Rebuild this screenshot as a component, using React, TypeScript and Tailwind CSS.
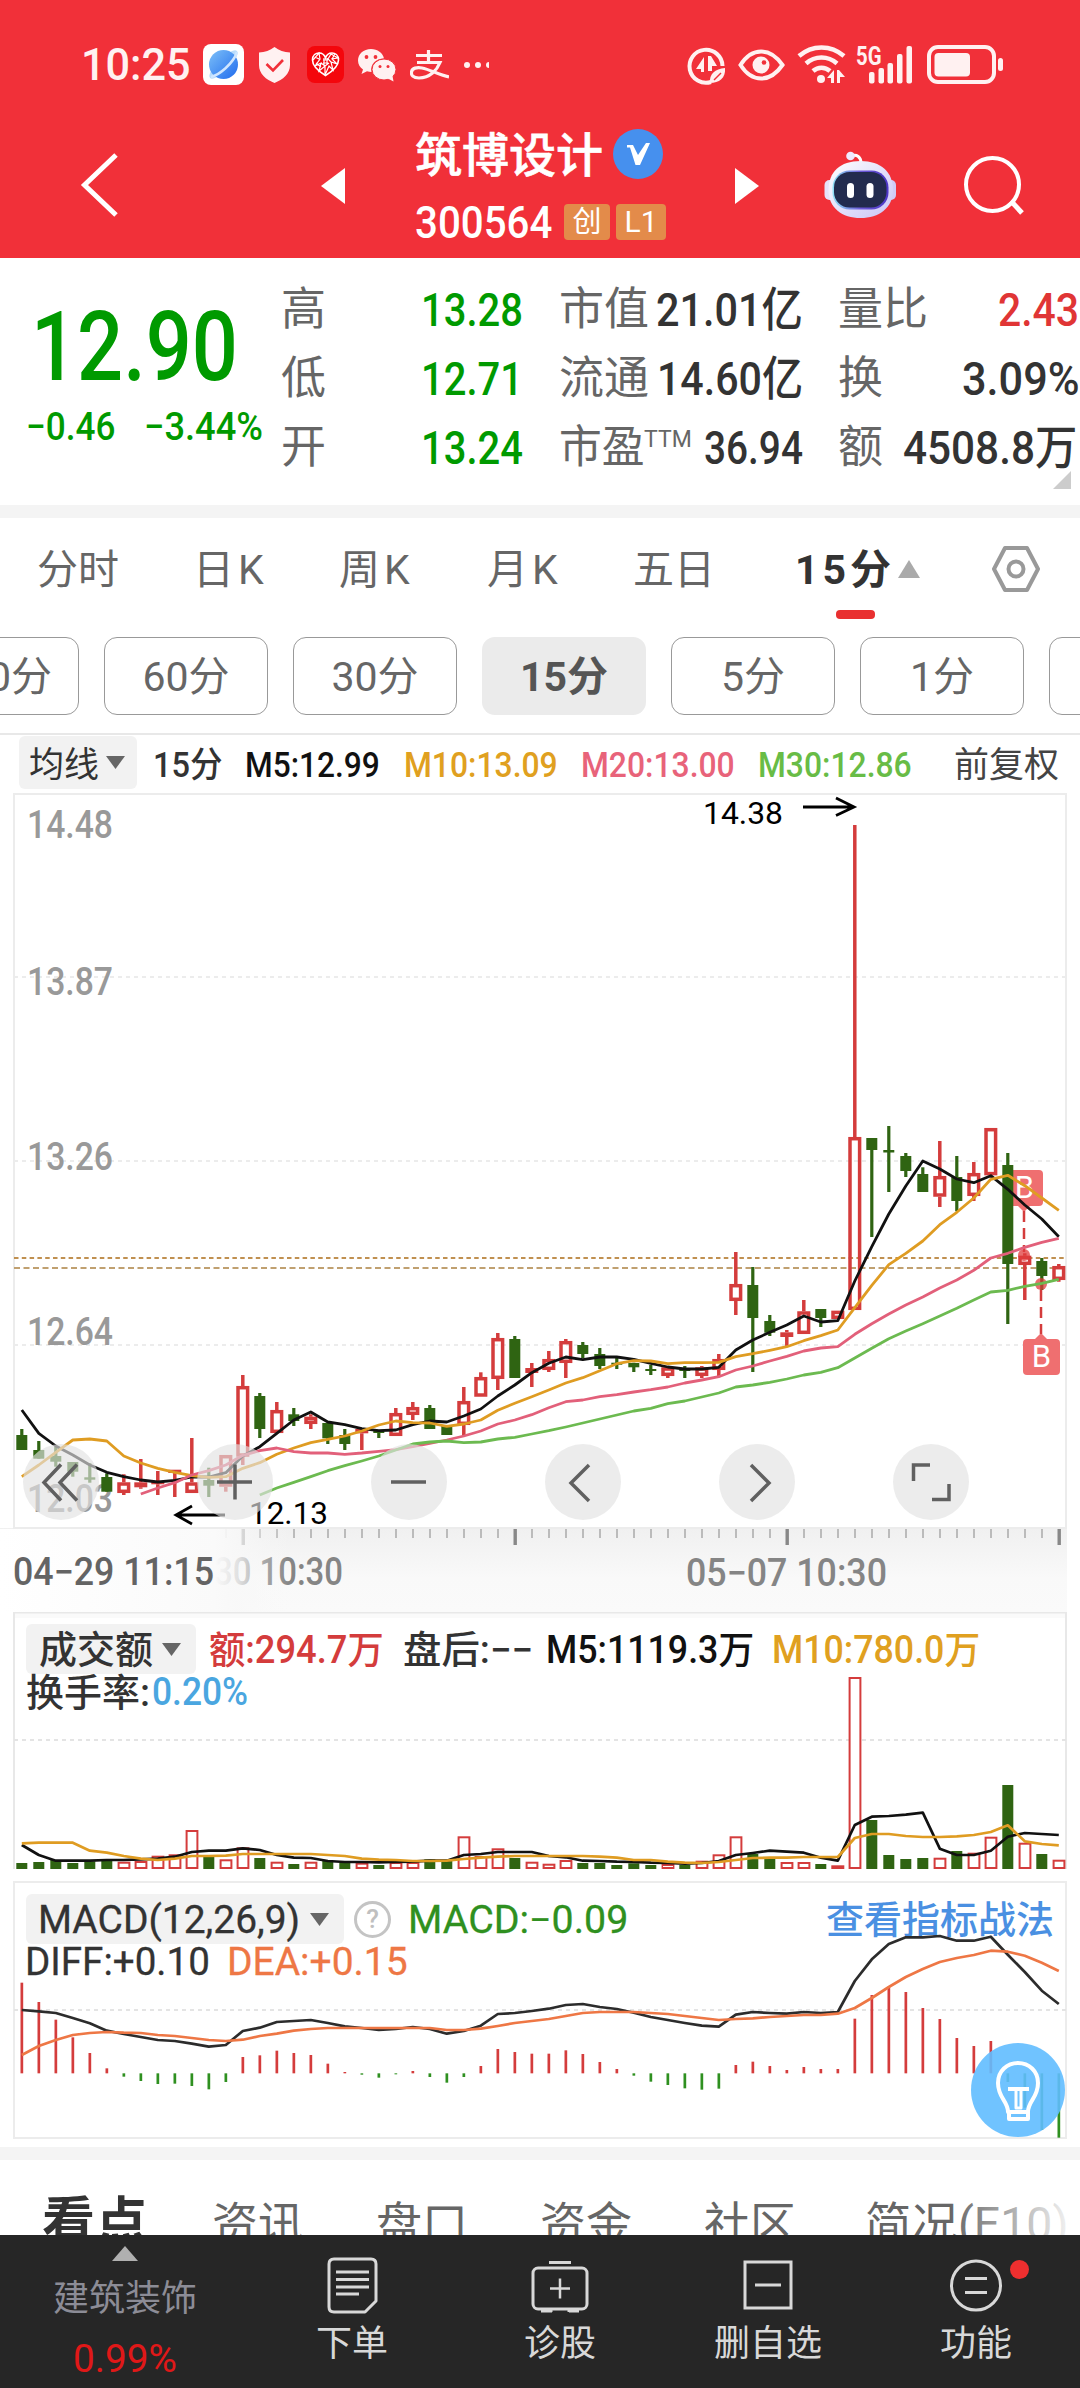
import type { ReactNode } from "react";

type LabelProps = { className?: string; k?: string; children: ReactNode };

/* One line of text in a box of fixed width; k is an optional horizontal scale class. */
function Fit({ className = "", k = "", children }: LabelProps) {
  return (
    <div className={`flex-none whitespace-nowrap leading-none ${className}`}>
      <span className={`inline-block origin-left align-top ${k}`}>{children}</span>
    </div>
  );
}

const STEP = 17;
const X0 = 21.8;
const cx = (i: number) => X0 + STEP * i;

const line = (values: number[], start = 0, offset = 0, unit = 1) =>
  values.map((v, i) => `${cx(i + start).toFixed(1)},${(offset + v * unit).toFixed(1)}`).join(" ");

/* [high, body top, body bottom, low, rising] */
const candles: [number, number, number, number, number][] = [
  [1429, 1435, 1450, 1450, 0], [1441, 1450, 1458.7, 1458.7, 0], [1446.7, 1456, 1461.7, 1466.7, 0],
  [1462, 1462, 1471.7, 1476.7, 0], [1463.3, 1477.3, 1479.7, 1482.7, 0], [1473.3, 1477, 1491.7, 1491.7, 0],
  [1474.3, 1482.3, 1493, 1495, 1], [1459, 1482.3, 1487.3, 1488.7, 1], [1471, 1481, 1484.3, 1495, 1],
  [1469.7, 1469.7, 1473, 1497, 1], [1438, 1482.3, 1493, 1493, 1], [1467.7, 1480, 1485.7, 1497, 0],
  [1455, 1455, 1486.7, 1491.7, 1], [1375, 1386, 1456.7, 1465, 1], [1393, 1396, 1429, 1438, 0],
  [1402, 1410, 1433, 1433, 1], [1408, 1414.3, 1421, 1426, 0], [1414.3, 1416.7, 1424, 1429, 1],
  [1423, 1423, 1438.3, 1444, 0], [1429, 1435, 1444, 1450, 0], [1429, 1429, 1433.3, 1450, 1],
  [1430, 1430.7, 1433, 1438, 0], [1408, 1413, 1436, 1436, 1], [1402, 1407, 1415, 1420, 1],
  [1405, 1408, 1429, 1429, 0], [1426, 1426, 1435, 1435, 0], [1387, 1401, 1425, 1435, 1],
  [1372.3, 1377, 1396.7, 1396.7, 1], [1333, 1338, 1379, 1390, 1], [1336, 1339, 1378, 1378, 0],
  [1363, 1368, 1373, 1387, 1], [1351, 1359, 1370, 1372, 1], [1339, 1341, 1363, 1378, 1],
  [1342, 1345, 1354, 1358, 0], [1348, 1354, 1366, 1369, 0], [1358, 1362.7, 1364.7, 1369, 0],
  [1362.7, 1363, 1367.3, 1372, 0], [1365, 1369, 1371, 1375, 0], [1366, 1367.3, 1376, 1378, 1],
  [1366, 1369, 1371, 1378, 0], [1366, 1367.3, 1376, 1378, 1], [1354, 1359, 1370, 1376, 1],
  [1252, 1284, 1301, 1315, 1], [1267, 1285, 1318, 1372, 0], [1315, 1321, 1332.7, 1336, 0],
  [1330, 1332.3, 1337, 1346.7, 1], [1300, 1311.3, 1334, 1334, 1], [1309, 1309, 1318, 1327, 0],
  [1310.7, 1310.7, 1319, 1319, 1], [825, 1137, 1310, 1310, 1], [1138, 1138, 1150, 1237, 0],
  [1126, 1150, 1152.5, 1192, 0], [1153, 1156, 1171, 1177, 0], [1167.3, 1174, 1192, 1192, 0],
  [1141, 1176, 1196.7, 1207, 1], [1156, 1177, 1201, 1211.3, 0], [1162, 1173, 1196, 1201, 1],
  [1128, 1128, 1175.3, 1175.3, 1], [1153, 1165, 1264, 1324, 0], [1253.3, 1255.7, 1265, 1300, 1],
  [1258, 1261, 1276, 1290, 0], [1264, 1266, 1280, 1281.7, 1],
];

const ma5 = [1410, 1433.3, 1446, 1455, 1465, 1472.3, 1476.7, 1480, 1482, 1480.3, 1477, 1477, 1472.7, 1456, 1446.7, 1433.3, 1420, 1412, 1422, 1424.7, 1428.7, 1430.7, 1430, 1424.7, 1421, 1422, 1416, 1409, 1396, 1385, 1372.7, 1363.3, 1357, 1359.7, 1357, 1357, 1359.3, 1363.3, 1367, 1369, 1369, 1367.3, 1350, 1340, 1332.3, 1325, 1316, 1322, 1320.7, 1281, 1246.7, 1214, 1186, 1161, 1169, 1179, 1182.7, 1175.7, 1189.3, 1205, 1219, 1236.7];
const ma10 = [1476.7, 1465, 1452.3, 1440, 1439, 1441, 1456, 1463, 1468.3, 1472.3, 1475.7, 1477.3, 1476.7, 1468.3, 1462.7, 1454.3, 1448, 1442.7, 1439.3, 1436, 1431, 1425, 1421, 1422.7, 1423, 1426.3, 1424, 1420, 1410.3, 1403.3, 1396.7, 1390, 1383, 1377.7, 1370.7, 1363.7, 1360.7, 1361, 1363.7, 1362.7, 1362.7, 1362.3, 1356.7, 1353.7, 1350.3, 1346.7, 1340.7, 1335.7, 1330, 1307.7, 1285.3, 1264.7, 1253.3, 1241, 1224.7, 1212.3, 1198, 1179.3, 1175.3, 1185.7, 1198, 1210.3];
const ma20 = [1494, 1488, 1482.7, 1475, 1470.7, 1465, 1455.3, 1450.7, 1448, 1451.7, 1453, 1453, 1454.3, 1453, 1451.3, 1449.7, 1446.7, 1443.3, 1440, 1436, 1431, 1424, 1420, 1414.7, 1407.7, 1401.7, 1400, 1396.7, 1394.7, 1392, 1389.7, 1387, 1383, 1380, 1376.7, 1370, 1366, 1361, 1356.3, 1351, 1348, 1346.7, 1334.3, 1323.7, 1314, 1305, 1297, 1288, 1280, 1270.3, 1258, 1253.3, 1247.3, 1242.3, 1238.3];
const ma30 = [1495, 1488, 1482.3, 1476.7, 1470.7, 1465.7, 1461, 1456, 1450, 1444, 1442, 1441, 1442.7, 1442, 1439, 1437.3, 1434, 1430.7, 1427, 1423, 1419, 1415, 1411, 1408.3, 1403.7, 1401, 1397, 1393, 1387, 1385, 1382.3, 1379, 1375, 1372.3, 1367.7, 1358, 1348.3, 1338.7, 1331, 1323.7, 1316, 1308.3, 1300, 1292, 1290.3, 1286.3, 1283.3, 1279.3];

const volume = [6, 7, 9, 6, 7.7, 8.3, 7.3, 8, 13.3, 14.7, 39, 12.3, 9.7, 21.7, 11, 7.3, 5, 7.3, 8, 6, 6.3, 4, 7, 7, 9.7, 8, 32.7, 13, 20.7, 11, 7.3, 5.3, 9, 6, 6, 4, 5.7, 4, 5, 4, 8.3, 14.7, 32.7, 15, 11.3, 7, 7, 5, 3.7, 192, 49, 14, 10, 11, 11.3, 18, 16.3, 32.3, 84, 26.3, 15, 9.3];
const volRising = new Set([6, 7, 8, 9, 10, 12, 13, 15, 17, 20, 22, 23, 26, 27, 28, 30, 31, 32, 38, 40, 41, 42, 45, 46, 48, 49, 54, 56, 57, 59, 61]);
const volMa5 = [735, 765, 782, 782, 782, 780, 780, 778, 776, 770, 756, 752, 752, 745, 750, 765, 773, 774, 783, 786, 786, 787, 786, 785, 782, 782, 765, 762, 756, 756, 756, 768, 772, 782, 783, 785, 786, 788, 789, 791, 789, 783, 765, 759, 752, 755, 758, 773, 782, 675, 650, 648, 644, 638, 746, 765, 765, 752, 710, 699, 702, 705];
const volMa10 = [730, 728, 728, 728, 752, 758, 768, 776, 780, 776, 768, 768, 767, 762, 762, 762, 762, 762, 765, 768, 776, 779, 780, 783, 783, 782, 777, 773, 770, 768, 768, 768, 768, 768, 770, 773, 780, 780, 785, 788, 789, 786, 780, 774, 773, 773, 771, 771, 771, 714, 702, 702, 708, 711, 711, 709, 705, 696, 676, 724, 732, 736];

const macd = [338, 396, 449, 502, 549, 595, 620, 633, 642, 641, 648, 658, 636, 561, 556, 542, 549, 555, 581, 606, 614, 623, 613, 603, 621, 638, 621, 588, 537, 546, 551, 551, 541, 552, 576, 597, 617, 635, 645, 655, 659, 656, 585, 575, 588, 600, 591, 597, 597, 446, 375, 351, 366, 414, 447, 504, 528, 513, 636, 713, 780, 803];
const diff = [420, 424, 429, 444, 460, 482, 492, 501, 510, 513, 521, 530, 525, 483, 473, 456, 453, 450, 459, 469, 474, 480, 477, 471, 477, 491, 483, 467, 432, 429, 423, 416, 405, 402, 411, 417, 428, 441, 450, 459, 467, 470, 434, 426, 429, 431, 426, 429, 426, 333, 268, 222, 202, 202, 198, 212, 212, 200, 254, 306, 362, 402];
const dea = [555, 528, 510, 495, 489, 486, 488, 489, 495, 498, 504, 510, 513, 509, 498, 491, 482, 477, 474, 474, 474, 474, 474, 474, 474, 480, 480, 476, 468, 459, 453, 447, 438, 429, 426, 426, 426, 429, 432, 438, 444, 450, 447, 445, 441, 438, 435, 435, 431, 414, 384, 351, 321, 297, 276, 264, 255, 242, 245, 257, 278, 303];

const RED = "#d43c3c";
const GREEN = "#2f6412";

function StatusBar() {
  return (
    <div className="flex h-[129px] items-center pl-[81px] text-[#fff1f1]">
      <Fit className="w-[110px] text-[45px] font-medium" k="scale-x-[0.96]">10:25</Fit>
      <svg className="ml-[12px] flex-none" width="41" height="41" viewBox="0 0 41 41">
        <defs>
          <linearGradient id="globe" x1="0" y1="0" x2="1" y2="1">
            <stop offset="0" stopColor="#7dc0f8" />
            <stop offset="1" stopColor="#1f6bee" />
          </linearGradient>
        </defs>
        <rect width="41" height="41" rx="8" fill="#fff" />
        <ellipse cx="20.5" cy="20.5" rx="19" ry="6" transform="rotate(-45 20.5 20.5)" fill="#b9dcfb" />
        <circle cx="20.5" cy="20.5" r="14.5" fill="url(#globe)" />
        <path d="M8 33C16 31 30 20 34 8" fill="none" stroke="#cfe6ff" strokeWidth="2.5" />
      </svg>
      <svg className="ml-[15px] flex-none" width="31" height="36" viewBox="0 0 31 36">
        <path d="M15.5 0C20 3.500 25 5 31 5.500V18C31 27 24 32.500 15.500 36C7 32.500 0 27 0 18V5.500C6 5 11 3.500 15.500 0Z" fill="#fff1f1" />
        <path d="M7.500 17L14 23.500L24 13" fill="none" stroke="#f13039" strokeWidth="2.6" />
      </svg>
      <svg className="ml-[17px] flex-none" width="37" height="37" viewBox="0 0 37 37">
        <rect width="37" height="37" rx="8" fill="#f4060c" />
        <path d="M18.500 29.500C11 25 5.500 20 5.500 14C5.500 9 9 7 12 7C15 7 17.500 9 18.500 12C19.500 9 22 7 25 7C28 7 31.500 9 31.500 14C31.500 20 26 25 18.500 29.500Z" fill="none" stroke="#fff" strokeWidth="1.6" />
        <path d="M6 14L12 7L13 13L8 20L14 17L12 25L18 20V29L22 20L26 24L24 16L30 18L25 13L31 12L24 8L21 13L25 17M12 13L8 11M14 17L18 20L22 17M16 14H21M16 17H21M17 12V19M20 12V19M9 17L14 21M28 8L25 13" fill="none" stroke="#fff" strokeWidth="1.2" />
      </svg>
      <svg className="ml-[13px] flex-none" width="40" height="34" viewBox="0 0 40 34">
        <path d="M14 1C6.500 1 1 6 1 12.500C1 16.500 3 19.500 6 21.500L4.500 26L10 23.300C11.500 23.800 13 24 14.500 24C13 16 19 10.500 27 10.500C26 5 20.500 1 14 1Z" fill="#fff1f1" />
        <ellipse cx="27" cy="21.5" rx="12" ry="10.5" fill="#fff1f1" stroke="#f13039" strokeWidth="1" />
        <path d="M30 30L36.500 33.500L35.500 28Z" fill="#fff1f1" />
        <g fill="#f13039">
          <circle cx="9.5" cy="9" r="1.9" />
          <circle cx="18.5" cy="9" r="1.9" />
          <circle cx="23" cy="18.5" r="1.5" />
          <circle cx="31" cy="18.5" r="1.5" />
        </g>
      </svg>
      <svg className="ml-[13px] flex-none" width="39" height="30" viewBox="0 0 39 30" fill="none" stroke="#fff1f1" strokeWidth="3.2">
        <path d="M18.500 0V12M6 5.500H32M7 12.500H30C27 20 20 28 9 28C3 28 1 25 1.500 22C2 18 7 17 12 18C20 19.500 29 25 39 27" />
      </svg>
      <svg className="ml-[14px] flex-none" width="27" height="8" viewBox="0 0 27 8" fill="#fff1f1">
        <circle cx="4" cy="4" r="3" />
        <circle cx="15" cy="4" r="3" />
        <path d="M26 1A3 3 0 0 0 26 7Z" />
      </svg>
      <svg className="ml-[197px] mt-[1px] flex-none overflow-visible" width="318" height="42" viewBox="687 44 318 42">
        <g fill="none" stroke="#fff1f1" strokeWidth="4">
          <path d="M711 82A16.500 16.500 0 1 1 722.500 66" />
          <path d="M740.500 65C752 47 770 47 782.500 65C770 83 752 83 740.500 65Z" />
          <path d="M799 56C812 44.500 831 44.500 844 56" strokeWidth="4.5" />
          <path d="M806 63.500C815 55.500 828 55.500 837 63.500" strokeWidth="4.5" />
          <path d="M813 71C818 66.500 825 66.500 830 71" strokeWidth="4.5" />
          <rect x="929" y="47" width="65" height="35" rx="9" />
        </g>
        <g fill="#fff1f1">
          <path d="M696 69L704 57V72H701V69ZM708 56H711L717 66H712V71H708Z" />
          <path d="M710 83C709 74 715 69 725 68C726 78 719 83 710 83Z" />
          <circle cx="761" cy="65" r="8.5" />
          <circle cx="821" cy="79" r="4" />
          <path d="M827 78L834 70V83H831V78ZM837 70H839L845 77H840V83H837Z" />
          <rect x="869" y="72" width="5.5" height="11.5" rx="2" />
          <rect x="878.5" y="68" width="5.5" height="15.5" rx="2" />
          <rect x="887.5" y="63" width="5.5" height="20.5" rx="2" />
          <rect x="897" y="54" width="5.5" height="29.5" rx="2" />
          <rect x="906.5" y="46" width="5.5" height="37.5" rx="2" />
          <rect x="934.5" y="53" width="35.5" height="23.5" rx="4" />
          <rect x="998" y="58" width="5" height="13" rx="2.5" />
          <text x="856" y="64.5" fontSize="25" fontWeight="700" textLength="25.5" lengthAdjust="spacingAndGlyphs">5G</text>
        </g>
        <circle cx="764" cy="62.5" r="2.3" fill="#f13039" />
        <path d="M714 80L721 73" stroke="#f13039" strokeWidth="1.5" />
      </svg>
    </div>
  );
}

function TitleBar() {
  return (
    <div className="flex h-[111px] items-center">
      <svg className="ml-[80px] flex-none" width="40" height="66" viewBox="0 0 40 66">
        <path d="M36 3L4.500 33L36 63" fill="none" stroke="#fff" strokeWidth="5" />
      </svg>
      <svg className="ml-[201px] mt-[3px] flex-none" width="24" height="36" viewBox="0 0 24 36">
        <path d="M24 0V36L0 18Z" fill="#fff" />
      </svg>
      <div className="ml-[70px] flex w-[252px] flex-none flex-col gap-[25px]">
        <div className="flex h-[50px] items-center text-white">
          <Fit className="mt-[3px] w-[188px] text-[47px] font-medium [-webkit-text-stroke:0.6px_currentColor]">筑博设计</Fit>
          <div className="ml-[10px] flex size-[50px] flex-none items-center justify-center rounded-full bg-[#4690ee]">
            <svg width="26" height="24" viewBox="0 0 26 24">
              <path d="M2 3H8L13 13L21 1H25L15 23H10.500L5 5.500H2Z" fill="#fff" />
            </svg>
          </div>
        </div>
        <div className="flex h-[36px] items-center text-white">
          <Fit className="w-[138px] text-[45px] font-medium" k="scale-x-[0.895]">300564</Fit>
          <div className="ml-[11px] flex h-[36px] w-[46px] flex-none items-center justify-center rounded-[4px] bg-[#e38b4a] text-[29px] leading-none">创</div>
          <div className="ml-[6px] flex h-[36px] w-[50px] flex-none items-center justify-center rounded-[4px] bg-[#e38b4a] text-[30px] leading-none">L1</div>
        </div>
      </div>
      <svg className="ml-[68px] mt-[3px] flex-none" width="24" height="36" viewBox="0 0 24 36">
        <path d="M0 0V36L24 18Z" fill="#fff" />
      </svg>
      <svg className="ml-[65px] flex-none" width="72" height="68" viewBox="825 149 72 68">
        <defs>
          <linearGradient id="shell" x1="0" y1="0" x2="1" y2="1">
            <stop offset="0" stopColor="#fff" />
            <stop offset="1" stopColor="#c9c4f6" />
          </linearGradient>
          <linearGradient id="visor" x1="0" y1="0" x2="1" y2="0">
            <stop offset="0" stopColor="#8fe0f5" />
            <stop offset="0.5" stopColor="#6d5bd8" />
            <stop offset="1" stopColor="#4b35c5" />
          </linearGradient>
        </defs>
        <path d="M852 154C858 152 862 155 862 161" fill="none" stroke="#fff" strokeWidth="3" />
        <circle cx="851.5" cy="154" r="4.3" fill="#efeaff" />
        <rect x="825.5" y="178" width="12" height="20" rx="5" fill="#e6e2fb" />
        <rect x="885" y="178" width="12" height="20" rx="5" fill="#d0cbf7" />
        <path d="M861.500 159C882 159 894 170 894 188C894 206 880 216 861.500 216C843 216 829.500 206 829.500 188C829.500 170 841 159 861.500 159Z" fill="url(#shell)" />
        <rect x="833.5" y="168.5" width="56" height="39" rx="17" fill="url(#visor)" />
        <rect x="835" y="170" width="52.5" height="35.5" rx="15.5" fill="#222b4e" />
        <rect x="848" y="181" width="7" height="15" rx="3.5" fill="#fff" />
        <rect x="867.5" y="181" width="7" height="15" rx="3.5" fill="#fff" />
      </svg>
      <svg className="ml-[67px] flex-none" width="62" height="62" viewBox="965 155 62 62" fill="none" stroke="#fff" strokeWidth="4">
        <circle cx="994.5" cy="185.5" r="26.5" />
        <path d="M1013 202L1024 214" strokeWidth="5" />
      </svg>
    </div>
  );
}

const num = "text-[47px] font-medium";
const label = "text-[45px] text-[#666]";

function Quote() {
  return (
    <section className="relative flex h-[247px] overflow-hidden bg-white text-[#333]">
      <div className="ml-[26px] mt-[41px] w-[240px] flex-none text-[#009a00]">
        <Fit className="ml-[5px] w-[209px] text-[96px] font-medium" k="scale-x-[0.845]">12.90</Fit>
        <div className="mt-[12px] flex h-[40px] items-center">
          <Fit className="w-[90px] text-[39px] font-medium" k="scale-x-[0.9]">−0.46</Fit>
          <Fit className="ml-[28px] w-[119px] text-[39px] font-medium" k="scale-x-[0.93]">−3.44%</Fit>
        </div>
      </div>
      <div className="ml-[15px] mt-[17px] w-[243px] flex-none text-[#009a00]">
        {[["高", "13.28"], ["低", "12.71"], ["开", "13.24"]].map(([name, v]) => (
          <div key={name} className="flex h-[69px] items-center justify-between">
            <Fit className={`w-[45px] ${label}`}>{name}</Fit>
            <Fit className={`w-[103px] ${num}`} k="scale-x-[0.85]">{v}</Fit>
          </div>
        ))}
      </div>
      <div className="ml-[35px] mt-[17px] w-[244px] flex-none">
        <div className="flex h-[69px] items-center justify-between">
          <Fit className={`w-[90px] ${label}`}>市值</Fit>
          <Fit className={`w-[147px] ${num}`} k="scale-x-[0.88]">21.01亿</Fit>
        </div>
        <div className="flex h-[69px] items-center justify-between">
          <Fit className={`w-[90px] ${label}`}>流通</Fit>
          <Fit className={`w-[146px] ${num}`} k="scale-x-[0.875]">14.60亿</Fit>
        </div>
        <div className="flex h-[69px] items-center">
          <Fit className={`w-[85px] ${label}`} k="scale-x-[0.95]">市盈</Fit>
          <Fit className="mb-[16px] w-[46px] text-[23px] text-[#666]">TTM</Fit>
          <Fit className={`ml-auto w-[99px] ${num}`} k="scale-x-[0.825]">36.94</Fit>
        </div>
      </div>
      <div className="ml-[35px] mt-[17px] w-[241px] flex-none">
        <div className="flex h-[69px] items-center justify-between">
          <Fit className={`w-[92px] ${label}`}>量比</Fit>
          <Fit className={`w-[81px] text-[#e03535] ${num}`} k="scale-x-[0.87]">2.43</Fit>
        </div>
        <div className="flex h-[69px] items-center justify-between">
          <Fit className={`w-[45px] ${label}`}>换</Fit>
          <Fit className={`w-[117px] ${num}`} k="scale-x-[0.92]">3.09%</Fit>
        </div>
        <div className="flex h-[69px] items-center justify-between">
          <Fit className={`w-[45px] ${label}`}>额</Fit>
          <Fit className={`w-[176px] ${num}`} k="scale-x-[0.9]">4508.8万</Fit>
        </div>
      </div>
      <svg className="absolute bottom-[16px] right-[9px]" width="18" height="18" viewBox="0 0 18 18">
        <path d="M18 0V18H0Z" fill="#ccc" />
      </svg>
    </section>
  );
}

function Periods() {
  const t = "pt-[2px] text-[41px] text-[#666]";
  return (
    <section className="h-[215px] overflow-hidden bg-white">
      <div className="flex h-[102px] items-center">
        <Fit className={`ml-[37px] w-[83px] ${t}`}>分时</Fit>
        <Fit className={`ml-[73px] w-[75px] tracking-[4px] ${t}`}>日K</Fit>
        <Fit className={`ml-[71px] w-[75px] tracking-[4px] ${t}`}>周K</Fit>
        <Fit className={`ml-[73px] w-[75px] tracking-[4px] ${t}`}>月K</Fit>
        <Fit className={`ml-[71px] w-[81px] ${t}`}>五日</Fit>
        <div className="relative ml-[81px] flex h-full flex-none items-center">
          <Fit className="w-[98px] pt-[2px] text-[41px] font-bold tracking-[4px] text-[#333]">15分</Fit>
          <svg className="ml-[5px]" width="22" height="18" viewBox="0 0 22 18">
            <path d="M11 0L22 18H0Z" fill="#aaa" />
          </svg>
          <div className="absolute bottom-[1px] left-[41px] h-[9px] w-[39px] rounded-[4px] bg-[#e93030]" />
        </div>
        <svg className="ml-[72px] flex-none" width="48" height="48" viewBox="0 0 48 48" fill="none" stroke="#999" strokeWidth="4" strokeLinejoin="round">
          <path d="M13 3H35L46 24L35 45H13L2 24Z" />
          <circle cx="24" cy="24" r="7.5" />
        </svg>
      </div>
      <div className="-ml-[85px] mt-[17px] flex w-[1300px] gap-[25px] text-[41px] leading-none">
        {["120分", "60分", "30分", "15分", "5分", "1分", ""].map((p) => (
          <div
            key={p}
            className={
              p === "15分"
                ? "flex h-[78px] w-[164px] flex-none items-center justify-center rounded-[13px] bg-[#ebebeb] pt-[2px] font-bold text-[#555]"
                : "flex h-[78px] w-[164px] flex-none items-center justify-center rounded-[13px] border border-[#999] pt-[2px] text-[#666]"
            }
          >
            {p}
          </div>
        ))}
      </div>
    </section>
  );
}

function Caret({ className }: { className: string }) {
  return (
    <svg className={`flex-none ${className}`} width="19" height="13" viewBox="0 0 19 13">
      <path d="M0 0H19L9.500 13Z" fill="#666" />
    </svg>
  );
}

function AverageRow() {
  return (
    <div className="flex h-[60px] items-center border-t-2 border-[#e8e8e8] bg-white text-[35px] font-medium">
      <div className="-mt-[3px] ml-[19px] flex h-[53px] w-[118px] flex-none items-center rounded-[6px] bg-[#f2f2f2] text-[#333]">
        <Fit className="ml-[10px] w-[69px] pt-[5px] font-normal">均线</Fit>
        <Caret className="ml-[8px]" />
      </div>
      <Fit className="ml-[16px] w-[69px] pt-[2px] text-[#333]" k="scale-x-[0.93]">15分</Fit>
      <Fit className="ml-[23px] w-[136px] pt-[2px] text-[#111]" k="scale-x-[0.905]">M5:12.99</Fit>
      <Fit className="ml-[23px] w-[155px] pt-[2px] text-[#e0a020]" k="scale-x-[0.91]">M10:13.09</Fit>
      <Fit className="ml-[22px] w-[155px] pt-[2px] text-[#e8637a]" k="scale-x-[0.91]">M20:13.00</Fit>
      <Fit className="ml-[22px] w-[155px] pt-[2px] text-[#68bc46]" k="scale-x-[0.91]">M30:12.86</Fit>
      <Fit className="ml-[41px] w-[105px] pt-[2px] font-normal text-[#444]">前复权</Fit>
    </div>
  );
}

const markerFill = "#ef6f70";

function PriceChart() {
  const frame = "#ececec";
  return (
    <section className="relative h-[819px] bg-white">
      <svg className="block" width="1080" height="819" viewBox="0 793 1080 819" fontFamily="Roboto, sans-serif">
        <defs>
          <linearGradient id="axisShade" x1="0" y1="0" x2="0" y2="1">
            <stop offset="0" stopColor="#f0f0f0" />
            <stop offset="0.6" stopColor="#f9f9f9" />
            <stop offset="1" stopColor="#fafafa" />
          </linearGradient>
          <linearGradient id="axisFade" x1="0" y1="0" x2="1" y2="0">
            <stop offset="0" stopColor="#fff" />
            <stop offset="0.74" stopColor="#fafafa" />
            <stop offset="0.82" stopColor="#f8f8f8" stopOpacity="0.8" />
            <stop offset="0.9" stopColor="#f8f8f8" stopOpacity="0.35" />
            <stop offset="1" stopColor="#f8f8f8" stopOpacity="0" />
          </linearGradient>
        </defs>
        <rect x="0" y="1528" width="1067" height="84" fill="url(#axisShade)" />
        <g stroke={frame} strokeWidth="2" strokeDasharray="4 4">
          <path d="M14 977H1066M14 1161H1066M14 1345H1066" />
        </g>
        <rect x="14" y="794" width="1052" height="734" fill="none" stroke={frame} strokeWidth="2" />
        <g fill="#999" fontSize="38" fontWeight="500">
          <text x="27" y="838" textLength="86" lengthAdjust="spacingAndGlyphs">14.48</text>
          <text x="27" y="995" textLength="86" lengthAdjust="spacingAndGlyphs">13.87</text>
          <text x="27" y="1170" textLength="86" lengthAdjust="spacingAndGlyphs">13.26</text>
          <text x="27" y="1345" textLength="86" lengthAdjust="spacingAndGlyphs">12.64</text>
          <text x="27" y="1512" textLength="86" lengthAdjust="spacingAndGlyphs">12.03</text>
        </g>
        <path d="M14 1258H1066" stroke="#c09050" strokeWidth="2" strokeDasharray="4.5 3.3" />
        <path d="M14 1268H1066" stroke="#c0a070" strokeWidth="2" strokeDasharray="6 3.5" />

        <g fill={markerFill}>
          <rect x="1006" y="1170" width="37" height="36" rx="4" />
          <path d="M1017 1205H1031L1024 1212Z" />
          <rect x="1023" y="1339" width="37" height="36" rx="4" />
          <path d="M1034 1340H1048L1041 1333Z" />
        </g>
        <g fill="#fff" fontSize="31" textAnchor="middle">
          <text x="1024.5" y="1198">B</text>
          <text x="1041.5" y="1367">B</text>
        </g>
        <path d="M1024 1211V1252M1041 1290V1334" stroke={RED} strokeWidth="2.5" strokeDasharray="11 6" />

        {candles.map(([hi, top, bottom, lo, up], i) =>
          up ? (
            <g key={i} stroke={RED} strokeWidth="3.5" fill="none">
              <path d={`M${cx(i)} ${hi}V${top}M${cx(i)} ${bottom}V${lo}`} />
              {bottom - top < 6 ? (
                <path d={`M${cx(i) - 6.5} ${(top + bottom) / 2}H${cx(i) + 6.5}`} strokeWidth={bottom - top} />
              ) : (
                <rect x={cx(i) - 4.8} y={top + 1.7} width="9.6" height={bottom - top - 3.4} />
              )}
            </g>
          ) : (
            <g key={i} fill={GREEN}>
              <rect x={cx(i) - 1.6} y={hi} width="3.2" height={lo - hi} />
              <rect x={cx(i) - 5.5} y={top} width="11" height={bottom - top} />
            </g>
          ),
        )}
        <circle cx="1024" cy="1255" r="6" fill="#e03c3c" fillOpacity="0.75" />
        <circle cx="1041" cy="1284" r="6" fill="#e03c3c" fillOpacity="0.75" />

        <g fill="none" strokeWidth="2.8" strokeLinejoin="round">
          <polyline points={line(ma5)} stroke="#111" />
          <polyline points={line(ma10)} stroke="#df9c22" />
          <polyline points={line(ma20, 7)} stroke="#e2607a" />
          <polyline points={line(ma30, 14)} stroke="#6cba50" />
        </g>

        <g fill="none" stroke="#000" strokeWidth="2.8">
          <path d="M803 807H854M836 798L854 807L836 815.500" />
          <path d="M225 1515H176M192 1506L176 1515L192 1524" />
        </g>
        <g fill="#000" fontSize="31">
          <text x="703" y="824" textLength="80" lengthAdjust="spacingAndGlyphs">14.38</text>
          <text x="249" y="1524" textLength="79" lengthAdjust="spacingAndGlyphs">12.13</text>
        </g>

        {Array.from({ length: 50 }, (_, n) => n + 12).map((i) => {
          const major = i === 13 || i === 29 || i === 45 || i === 61;
          return (
            <rect key={i} x={cx(i) - (major ? 1.3 : 0.8)} y="1529" width={major ? 3.4 : 2} height={major ? 16 : 9} fill={major ? "#888" : "#bbb"} />
          );
        })}
        <g fill="#858585" fontSize="38" fontWeight="500">
          <text x="214" y="1585" textLength="129" lengthAdjust="spacingAndGlyphs">30 10:30</text>
          <text x="686" y="1586" textLength="201" lengthAdjust="spacingAndGlyphs">05−07 10:30</text>
        </g>
        <rect x="0" y="1529" width="290" height="83" fill="url(#axisFade)" />
        <text x="13" y="1585" fill="#646464" fontSize="38" fontWeight="500" textLength="201" lengthAdjust="spacingAndGlyphs">04−29 11:15</text>
      </svg>

      <div className="absolute left-[23px] top-[651px] flex gap-[98px]">
        {[
          "M38 20.500L21 38.500L38 56.500M54 20.500L37 38.500L54 56.500",
          "M20 38H55M38 20.500V55.500",
          "M20 38H55",
          "M44 21L26 39L44 57",
          "M32 21L50 39L32 57",
          "M20.500 37V21H37M56 40V55.500H39",
        ].map((d) => (
          <div key={d} className="size-[76px] rounded-full bg-[#e2e2e2]/65">
            <svg width="76" height="76" viewBox="0 0 76 76">
              <path d={d} fill="none" stroke="#606060" strokeWidth="3.5" />
            </svg>
          </div>
        ))}
      </div>
    </section>
  );
}

function VolumeChart() {
  return (
    <section className="relative h-[264px] bg-white text-[38px] font-medium text-[#333]">
      <svg className="absolute left-0 top-0" width="1080" height="264" viewBox="0 1612 1080 264">
        <rect x="14" y="1612" width="1052" height="6" fill="#fafafa" />
        <path d="M14 1869V1612.500H1066V1869" fill="none" stroke="#e8e8e8" strokeWidth="2" />
        <path d="M14 1740H1066" stroke="#e4e4e4" strokeWidth="2" strokeDasharray="4 4" />
        {volume.map((h, i) =>
          volRising.has(i) ? (
            h < 4 ? (
              <rect key={i} x={cx(i) - 6.5} y={1869 - h} width="13" height={h} fill={RED} />
            ) : (
              <rect key={i} x={cx(i) - 5.2} y={1870 - h} width="10.8" height={h - 2} fill="#fff" stroke={RED} strokeWidth="2" />
            )
          ) : (
            <rect key={i} x={cx(i) - 5.5} y={1869 - h} width="11" height={h} fill={GREEN} />
          ),
        )}
        <g fill="none" strokeWidth="2.7" strokeLinejoin="round">
          <polyline points={line(volMa5, 0, 1600, 1 / 3)} stroke="#111" />
          <polyline points={line(volMa10, 0, 1600, 1 / 3)} stroke="#df9c22" />
        </g>
      </svg>
      <div className="relative flex items-center pt-[12px]">
        <div className="ml-[26px] flex h-[50px] w-[170px] flex-none items-center rounded-[6px] bg-[#f2f2f2]">
          <Fit className="ml-[13px] w-[114px] pt-[1px]">成交额</Fit>
          <Caret className="ml-[9px]" />
        </div>
        <Fit className="ml-[13px] w-[175px] pt-[1px] text-[#d43c3c]" k="scale-x-[0.955]">额:294.7万</Fit>
        <Fit className="ml-[19px] w-[132px] pt-[1px]" k="scale-x-[1.01]">盘后:−−</Fit>
        <Fit className="ml-[11px] w-[207px] pt-[1px] text-[#111]" k="scale-x-[0.94]">M5:1119.3万</Fit>
        <Fit className="ml-[19px] w-[207px] pt-[1px] text-[#e0a020]" k="scale-x-[0.94]">M10:780.0万</Fit>
      </div>
      <div className="relative flex h-[36px] items-center">
        <Fit className="ml-[26px] w-[125px] pt-[2px]">换手率:</Fit>
        <Fit className="ml-[1px] w-[97px] text-[#4aa6e0]" k="scale-x-[0.93]">0.20%</Fit>
      </div>
    </section>
  );
}

function MacdChart() {
  return (
    <section className="relative h-[271px] bg-white text-[38px] text-[#333]">
      <svg className="absolute left-0 top-0" width="1080" height="271" viewBox="0 1876 1080 271">
        <rect x="14" y="1882" width="1052" height="256" fill="none" stroke="#ececec" strokeWidth="2" />
        <path d="M14 2010H1066" stroke="#e4e4e4" strokeWidth="2" strokeDasharray="4 4" />
        {macd.map((v, i) => (
          <rect
            key={i}
            x={cx(i) - 1.3}
            y={1870 + Math.min(v, 610) / 3}
            width="2.7"
            height={Math.abs(v - 610) / 3}
            fill={v < 610 ? RED : "#2f9020"}
          />
        ))}
      </svg>
      <div className="relative flex items-center pt-[18px]">
        <div className="ml-[26px] flex h-[50px] w-[318px] flex-none items-center rounded-[6px] bg-[#f2f2f2]">
          <Fit className="ml-[12px] w-[262px] pt-[2px] [-webkit-text-stroke:0.3px_currentColor]" k="scale-x-[1.025]">MACD(12,26,9)</Fit>
          <Caret className="ml-[10px]" />
        </div>
        <div className="ml-[10px] flex size-[37px] flex-none items-center justify-center rounded-full border-[3px] border-[#c4c4c4] text-[26px] font-medium leading-none text-[#c0c0c0]">?</div>
        <Fit className="ml-[17px] w-[220px] pt-[1px] text-[#2f9020] [-webkit-text-stroke:0.3px_currentColor]" k="scale-x-[1.035]">MACD:−0.09</Fit>
        <Fit className="ml-[198px] w-[228px] pt-[2px] font-medium text-[#4a90e2]">查看指标战法</Fit>
      </div>
      <div className="relative flex h-[34px] items-center">
        <Fit className="ml-[25px] w-[184px] pt-[1px] [-webkit-text-stroke:0.3px_currentColor]" k="scale-x-[1.015]">DIFF:+0.10</Fit>
        <Fit className="ml-[18px] w-[182px] pt-[1px] text-[#ee7745] [-webkit-text-stroke:0.3px_currentColor]" k="scale-x-[1.025]">DEA:+0.15</Fit>
      </div>
      <svg className="absolute left-0 top-0" width="1080" height="271" viewBox="0 1876 1080 271">
        <g fill="none" strokeWidth="2.7" strokeLinejoin="round">
          <polyline points={line(diff, 0, 1870, 1 / 3)} stroke="#2c2c2c" />
          <polyline points={line(dea, 0, 1870, 1 / 3)} stroke="#ee7745" />
        </g>
        <circle cx="1018" cy="2090" r="47" fill="#60bcff" fillOpacity="0.9" />
        <g fill="none" stroke="#fff" strokeWidth="4" strokeLinejoin="round">
          <path d="M1008 2112C1008 2101 998 2098 998 2083C998 2071 1007 2063 1018 2063C1029 2063 1038 2071 1038 2083C1038 2098 1028 2101 1028 2112Z" />
          <path d="M1009 2112V2119H1028V2112M1008 2089H1029" />
          <path d="M1016 2089V2108H1021V2089" strokeWidth="3" />
        </g>
      </svg>
    </section>
  );
}

function ContentTabs() {
  const t = "text-[46px] text-[#666]";
  return (
    <div className="relative flex h-[75px] items-start overflow-hidden bg-white pt-[41px]">
      <Fit className="-mt-[4px] ml-[42px] w-[106px] text-[53px] font-bold text-[#333]">看点</Fit>
      <Fit className={`ml-[64px] w-[94px] ${t}`}>资讯</Fit>
      <Fit className={`ml-[70px] w-[92px] ${t}`}>盘口</Fit>
      <Fit className={`ml-[72px] w-[92px] ${t}`}>资金</Fit>
      <Fit className={`ml-[72px] w-[91px] ${t}`}>社区</Fit>
      <Fit className={`ml-[70px] w-[201px] ${t}`} k="scale-x-[1.01]">简况(E10)</Fit>
      <div className="absolute right-0 top-0 h-full w-[130px] bg-gradient-to-r from-white/0 to-white" />
    </div>
  );
}

function BottomNav() {
  return (
    <nav className="relative flex h-[153px] bg-[#262626] text-[36px] text-[#d8d8d8]">
      <div className="ml-[52px] flex w-[146px] flex-none flex-col items-center pt-[11px]">
        <svg width="26" height="15" viewBox="0 0 26 15">
          <path d="M13 0L26 15H0Z" fill="#b0b0b0" />
        </svg>
        <Fit className="mt-[20px] w-[144px] text-[#8c8c96]">建筑装饰</Fit>
        <Fit className="mt-[23px] w-[104px] text-[38px] text-[#e01818]" k="scale-x-[1.02]">0.99%</Fit>
      </div>
      <div className="ml-[118px] flex w-[72px] flex-none flex-col items-center pt-[22px]">
        <svg width="51" height="57" viewBox="0 0 51 57" fill="none" stroke="#d8d8d8" strokeWidth="3">
          <path d="M7 2H44Q49 2 49 7V44L38 55H7Q2 55 2 50V7Q2 2 7 2Z" strokeLinejoin="round" />
          <path d="M9 15H42M9 22.500H42M9 30H42M9 37H32" />
        </svg>
        <Fit className="mt-[12px] w-[72px]">下单</Fit>
      </div>
      <div className="ml-[136px] flex w-[72px] flex-none flex-col items-center pt-[25px]">
        <svg width="58" height="54" viewBox="0 0 58 54" fill="none" stroke="#d8d8d8" strokeWidth="3">
          <path d="M18 2.500H40M20 52V49M38 52V49" />
          <rect x="2" y="8" width="54" height="41" rx="5" />
          <path d="M19 28.500H39M29 18.500V38.500" strokeWidth="2.5" />
          <path d="M10 51H21M38 51H48" strokeWidth="3" />
        </svg>
        <Fit className="mt-[12px] w-[72px]">诊股</Fit>
      </div>
      <div className="ml-[118px] flex w-[108px] flex-none flex-col items-center pt-[25px]">
        <svg width="50" height="50" viewBox="0 0 50 50" fill="none" stroke="#d8d8d8" strokeWidth="3">
          <rect x="2" y="2" width="46" height="46" />
          <path d="M12 25H38" />
        </svg>
        <Fit className="mt-[16px] w-[108px]">删自选</Fit>
      </div>
      <div className="relative ml-[118px] flex w-[72px] flex-none flex-col items-center pt-[24px]">
        <svg width="52" height="53" viewBox="0 0 52 53" fill="none" stroke="#d8d8d8" strokeWidth="3">
          <circle cx="26" cy="26.5" r="24.5" />
          <path d="M15 19.500H37M15 33.500H37" />
        </svg>
        <div className="absolute -right-[17px] top-[25px] size-[19px] rounded-full bg-[#ee2f2f]" />
        <Fit className="mt-[14px] w-[72px]">功能</Fit>
      </div>
    </nav>
  );
}

export default function App() {
  return (
    <main className="w-[1080px] overflow-hidden bg-white font-[Roboto,'Noto_Sans_CJK_SC',sans-serif]">
      <header className="h-[258px] bg-[#f13039]">
        <StatusBar />
        <TitleBar />
      </header>
      <Quote />
      <div className="h-[13px] bg-[#f4f4f4]" />
      <Periods />
      <AverageRow />
      <PriceChart />
      <VolumeChart />
      <MacdChart />
      <div className="h-[13px] bg-[#f4f4f4]" />
      <ContentTabs />
      <BottomNav />
    </main>
  );
}
